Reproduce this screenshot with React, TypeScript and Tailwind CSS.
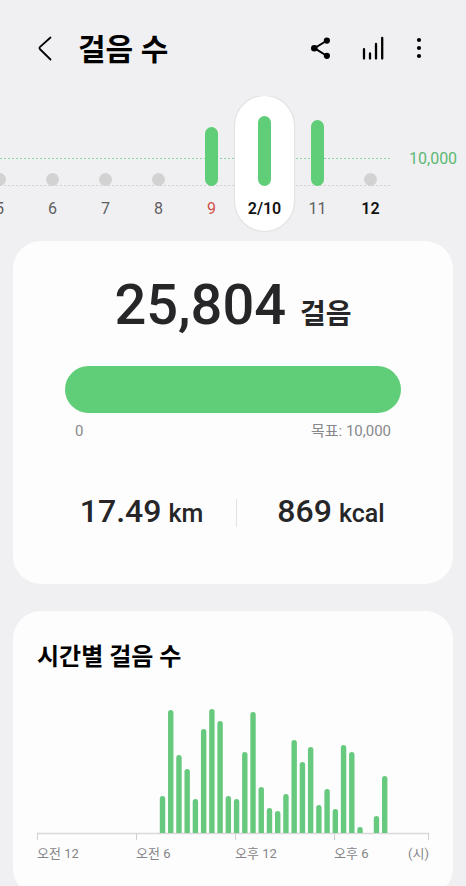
type Day = { label: string; height: number; tone: string };

const days: Day[] = [
  { label: "5", height: 13, tone: "text-[#5f5f63]" },
  { label: "6", height: 13, tone: "text-[#5f5f63]" },
  { label: "7", height: 13, tone: "text-[#5f5f63]" },
  { label: "8", height: 13, tone: "text-[#5f5f63]" },
  { label: "9", height: 59, tone: "text-[#d0524c]" },
  { label: "2/10", height: 70, tone: "font-semibold text-[#111113]" },
  { label: "11", height: 66, tone: "text-[#5f5f63]" },
  { label: "12", height: 13, tone: "font-semibold text-[#111113]" },
];

const SELECTED = "2/10";

// Half-hour step bars, starting at 07:30.
const halfHours = [
  37, 123, 78, 64, 34, 104, 124, 112, 37, 34, 81, 121, 46, 25, 22, 39, 93, 71,
  86, 28, 44, 24, 88, 81, 6, 0, 17, 57,
];

const ticks = [0, 99, 198, 297, 391];

function Header() {
  return (
    <header className="flex h-24 shrink-0 items-center justify-between pr-[39px] pl-[30px]">
      <div className="flex items-center gap-[18px]">
        <button type="button" aria-label="뒤로" className="flex size-[30px] items-center justify-center">
          <svg width="30" height="30" viewBox="0 0 30 30" fill="none" stroke="#000" strokeWidth="1.8" strokeLinecap="round" strokeLinejoin="round">
            <path d="M20.5 4.5 L9.8 14.2 Q9 15 9.8 16 L20.5 26.5" />
          </svg>
        </button>
        <h1 className="pt-[3px] text-[30px] leading-10 font-bold text-black">걸음 수</h1>
      </div>
      <div className="flex items-center gap-[23px]">
        <button type="button" aria-label="공유" className="flex size-[30px] items-center justify-center">
          <svg width="30" height="30" viewBox="0 0 30 30" stroke="#000" strokeWidth="2">
            <path d="M22 7.5 L9.5 15.2 L22 23" fill="none" />
            <circle cx="9.3" cy="15.2" r="2.3" />
            <circle cx="21.9" cy="7.6" r="2.1" />
            <circle cx="21.9" cy="22.8" r="2.1" />
          </svg>
        </button>
        <button type="button" aria-label="통계" className="flex size-[30px] items-center justify-center">
          <svg width="30" height="30" viewBox="0 0 30 30" stroke="#000" strokeWidth="2.3" strokeLinecap="round">
            <path d="M6 16.2V25.6M12 20.5V25.6M18 11V25.6M24.2 5V25.6" />
          </svg>
        </button>
        <button type="button" aria-label="더보기" className="flex h-[30px] w-4 items-center justify-center">
          <svg width="16" height="30" viewBox="0 0 16 30">
            <circle cx="8" cy="7" r="2.1" />
            <circle cx="8" cy="15" r="2.1" />
            <circle cx="8" cy="23" r="2.1" />
          </svg>
        </button>
      </div>
    </header>
  );
}

function DayColumn({ day }: { day: Day }) {
  const selected = day.label === SELECTED;
  return (
    <button
      type="button"
      aria-pressed={selected}
      className={
        selected
          ? "-mx-[3px] flex h-[135px] w-[59px] shrink-0 flex-col items-center rounded-full bg-white shadow-[0_0_2px_rgba(0,0,0,0.2)]"
          : "flex h-[135px] w-[53px] shrink-0 flex-col items-center"
      }
    >
      <span className="flex h-[90px] items-end">
        <span
          className={day.height > 13 ? "block w-[13px] rounded-full bg-[#60cd78]" : "block w-[13px] rounded-full bg-[#d2d2d3]"}
          style={{ height: day.height }}
        />
      </span>
      <span className={`mt-[11px] text-base leading-6 ${day.tone}`}>{day.label}</span>
    </button>
  );
}

function DayStrip() {
  return (
    <section className="flex shrink-0">
      <div className="relative flex min-w-0 flex-1 justify-end overflow-hidden pb-[10px]">
        <svg className="absolute inset-y-0 left-0 h-full w-[calc(100%-7px)]" aria-hidden="true">
          <line x1="0" x2="100%" y1="62.5" y2="62.5" stroke="#8ed3a4" strokeDasharray="2 2" />
          <line x1="0" x2="100%" y1="89.5" y2="89.5" stroke="#d2d2d4" strokeDasharray="2 2" />
        </svg>
        <div className="relative flex">
          {days.map((day) => (
            <DayColumn key={day.label} day={day} />
          ))}
        </div>
      </div>
      <span className="w-[69px] shrink-0 pt-[51px] pl-3 text-base leading-6 text-[#5cb873]">10,000</span>
    </section>
  );
}

function Summary() {
  return (
    <section className="flex h-[343px] shrink-0 flex-col rounded-[28px] bg-[#fdfdfe] pt-7 text-[#262628]">
      <p className="flex items-baseline justify-center gap-[14px] leading-[72px] font-medium">
        <span className="text-[56px]">25,804</span>
        <span className="text-[28px] font-bold">걸음</span>
      </p>
      <div className="mt-[15px] px-[52px]">
        <div role="progressbar" aria-label="걸음 수" aria-valuemin={0} aria-valuemax={10000} aria-valuenow={10000} className="h-[47px] rounded-full bg-[#60cd78]" />
        <div className="mt-[6px] flex justify-between px-[10px] text-[15px] leading-6 text-[#88888b]">
          <span>0</span>
          <span>목표: 10,000</span>
        </div>
      </div>
      <div className="mt-12 grid grid-cols-2 items-center pr-7 pl-[34px] font-medium">
        <p className="flex items-baseline justify-center gap-[7px] leading-10">
          <span className="text-[32px]">17.49</span>
          <span className="text-[25px]">km</span>
        </p>
        <div className="flex items-center">
          <span className="h-7 w-px bg-[#e3e3e6]" />
          <p className="flex flex-1 items-baseline justify-center gap-[7px] leading-10">
            <span className="text-[32px]">869</span>
            <span className="text-[25px]">kcal</span>
          </p>
        </div>
      </div>
    </section>
  );
}

function HourlySteps() {
  return (
    <section className="shrink-0 rounded-[28px] bg-[#fdfdfe] px-6 pt-[26px] pb-8">
      <h2 className="text-[24px] leading-10 font-bold text-black">시간별 걸음 수</h2>
      <svg className="mt-[22px] block w-full" viewBox="0 0 392 142" role="img" aria-label="시간별 걸음 수">
        <path d="M0 134.5H392" stroke="#d9d9db" strokeWidth="1.5" />
        {ticks.map((x) => (
          <path key={x} d={`M${x + 0.5} 134V141`} stroke="#d0d0d2" />
        ))}
        {halfHours.map((h, i) => {
          if (h === 0) return null;
          const x = 122.8 + i * 8.23;
          const r = Math.min(2.7, h);
          return (
            <path
              key={i}
              fill="#66c97d"
              d={`M${x} 134V${134 - h + r}a${r} ${r} 0 0 1 5.4 0V134Z`}
            />
          );
        })}
      </svg>
      <div className="mt-[3px] grid grid-cols-[99fr_99fr_99fr_95fr] text-[13px] leading-5 text-[#858588]">
        <span>오전 12</span>
        <span>오전 6</span>
        <span>오후 12</span>
        <span className="flex justify-between">
          <span>오후 6</span>
          <span>(시)</span>
        </span>
      </div>
    </section>
  );
}

export default function App() {
  return (
    <div className="flex h-screen flex-col overflow-y-auto bg-[#f0f0f2] font-['Roboto','Noto_Sans_CJK_KR',sans-serif] [scrollbar-width:none]">
      <Header />
      <DayStrip />
      <main className="flex flex-col gap-[27px] px-[13px] pb-6">
        <Summary />
        <HourlySteps />
      </main>
    </div>
  );
}
